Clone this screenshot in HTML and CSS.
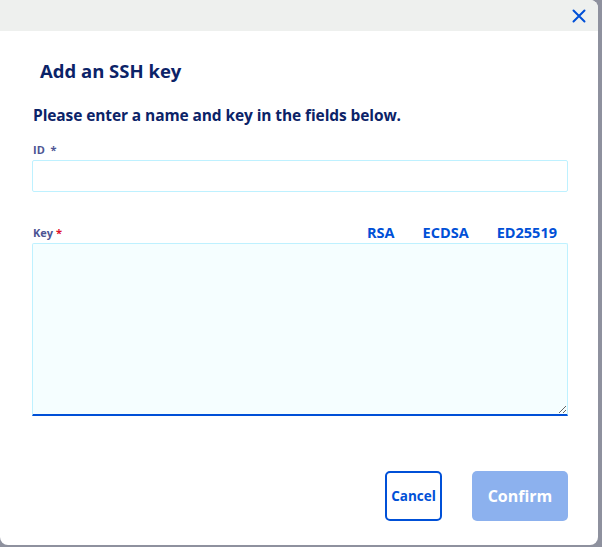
FILE: index.html
```html
<!DOCTYPE html>
<html>
<head>
<meta charset="utf-8">
<link rel="stylesheet" href="styles.css">
</head>
<body>
<div class="modal">
  <div class="modal-head">
    <button class="close" aria-label="Close">
      <svg width="14" height="14" viewBox="0 0 14 14"><path d="M1.5 1.5 L12.5 12.5 M12.5 1.5 L1.5 12.5" stroke="#0050d7" stroke-width="2" stroke-linecap="round" fill="none"/></svg>
    </button>
  </div>
  <div class="modal-body">
    <h2 class="title">Add an SSH key</h2>
    <p class="intro">Please enter a name and key in the fields below.</p>
    <div class="field">
      <label class="label">ID &nbsp;<span class="req">*</span></label>
      <input class="input" type="text">
    </div>
    <div class="field field-key">
      <div class="key-row">
        <label class="label">Key <span class="req red">*</span></label>
        <div class="links">
          <a class="link">RSA</a>
          <a class="link">ECDSA</a>
          <a class="link">ED25519</a>
        </div>
      </div>
      <textarea class="textarea"></textarea>
    </div>
  </div>
  <div class="modal-foot">
    <button class="btn btn-secondary">Cancel</button>
    <button class="btn btn-primary" disabled>Confirm</button>
  </div>
</div>
</body>
</html>
```
FILE: styles.css
```css
html, body {
  margin: 0;
  padding: 0;
}
body {
  width: 602px;
  height: 547px;
  background: #8e919e;
  font-family: "Open Sans", "Noto Sans", sans-serif;
  overflow: hidden;
}
.modal {
  width: 598px;
  height: 545px;
  background: #ffffff;
  border-radius: 0 8px 8px 8px;
  overflow: hidden;
  display: flex;
  flex-direction: column;
}
.modal-head {
  height: 31px;
  flex: none;
  background: #eef0ee;
  display: flex;
  justify-content: flex-end;
  align-items: center;
  padding-right: 12px;
}
.close {
  border: 0;
  background: transparent;
  padding: 0;
  width: 14px;
  height: 14px;
  display: flex;
}
.modal-body {
  padding: 0 30px 0 32px;
}
.title {
  margin: 28px 0 0 8px;
  font-size: 18.5px;
  font-weight: 700;
  line-height: 24px;
  color: #0b2368;
}
.intro {
  margin: 22px 0 0 1px;
  font-size: 15.5px;
  font-weight: 700;
  line-height: 20px;
  color: #0b2368;
  letter-spacing: -0.1px;
}
.field {
  margin-top: 18px;
}
.label {
  display: block;
  font-size: 11px;
  font-weight: 700;
  color: #4d5593;
  line-height: 14px;
  padding-left: 1px;
}
.req { color: #4d5593; }
.req.red { color: #e0102b; }
.input {
  display: block;
  box-sizing: border-box;
  width: 536px;
  height: 32px;
  margin-top: 3px;
  border: 1px solid #bef1ff;
  border-radius: 2px;
  background: #fff;
}
.field-key {
  margin-top: 32px;
}
.key-row {
  display: flex;
  justify-content: space-between;
  align-items: center;
  height: 18px;
}
.links {
  display: flex;
  gap: 28px;
  padding-right: 11px;
}
.link {
  font-size: 14.5px;
  font-weight: 700;
  color: #0050d7;
  line-height: 18px;
}
.textarea {
  display: block;
  box-sizing: border-box;
  width: 536px;
  height: 173px;
  margin-top: 1px;
  border: 1px solid #bef1ff;
  border-bottom: 2px solid #0050d7;
  border-radius: 2px 2px 0 0;
  background: #f5feff;
  resize: both;
}
.modal-foot {
  display: flex;
  justify-content: flex-end;
  gap: 30px;
  padding: 55px 30px 0 0;
}
.btn {
  box-sizing: border-box;
  height: 50px;
  border-radius: 5px;
  font-family: inherit;
  font-size: 14px;
  font-weight: 700;
}
.btn-secondary {
  width: 57px;
  background: #fff;
  border: 2px solid #0050d7;
  color: #0050d7;
  padding: 0;
  font-size: 13.5px;
}
.btn-primary {
  width: 96px;
  background: #8cb1ee;
  border: 0;
  color: #ffffff;
  font-size: 16px;
}
```
